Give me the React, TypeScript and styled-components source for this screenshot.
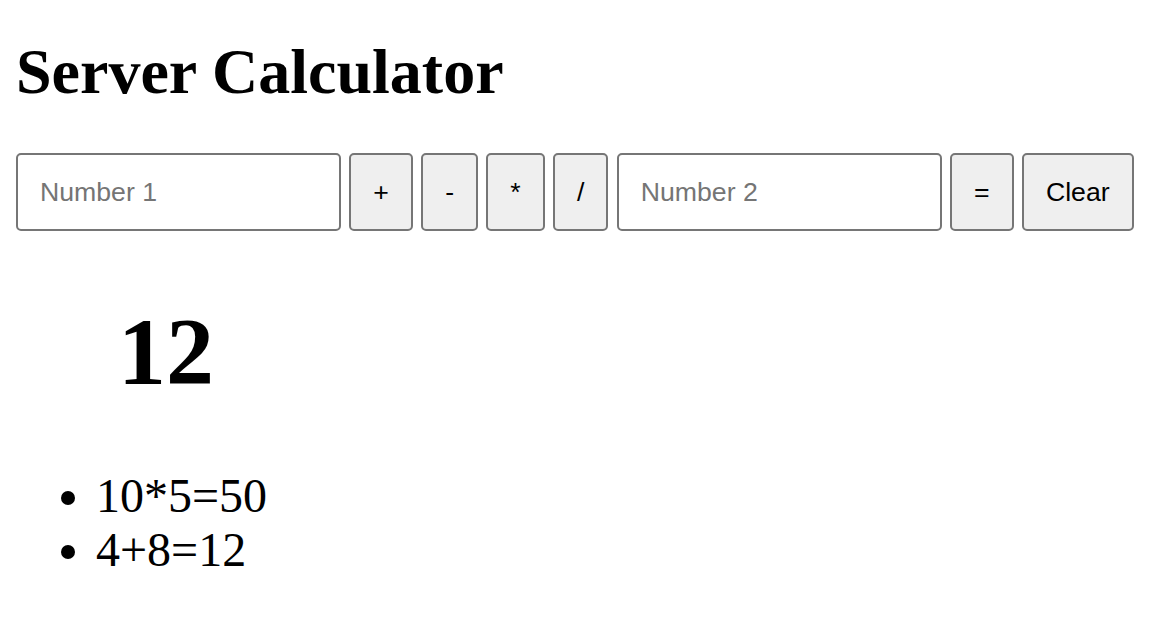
import React from "react";
import styled, { createGlobalStyle } from "styled-components";

const Global = createGlobalStyle`
  html, body { background: #ffffff; }
  body {
    margin: 0;
    font-family: "Liberation Serif", "Times New Roman", serif;
    font-size: 32px;
    color: #000000;
  }
`;

const Page = styled.main`
  display: block;
  padding: 16px;
`;

const Title = styled.h1`
  font-family: "Liberation Serif", "Times New Roman", serif;
  font-weight: 700;
  font-size: 64px;
  line-height: normal;
  margin: 19px 0 44px;
`;

const Controls = styled.form`
  display: flex;
  align-items: stretch;
  gap: 8.3px;
  height: 78px;
`;

const NumberInput = styled.input`
  box-sizing: border-box;
  width: 325px;
  height: 78px;
  padding: 0 22px;
  border: 2px solid #767676;
  border-radius: 5px;
  font-family: "Liberation Sans", Arial, sans-serif;
  font-size: 26.67px;
  color: #000;
  background: #fff;
  outline: none;
  &::placeholder { color: #757575; }
`;

const OpButton = styled.button`
  box-sizing: border-box;
  height: 78px;
  padding: 0 22px;
  border: 2px solid #767676;
  border-radius: 5px;
  background: #efefef;
  color: #000;
  font-family: "Liberation Sans", Arial, sans-serif;
  font-size: 26.67px;
  cursor: pointer;
`;

const Result = styled.h1`
  font-family: "Liberation Serif", "Times New Roman", serif;
  font-weight: 700;
  font-size: 96px;
  line-height: normal;
  margin: 65px 0 0;
  padding-left: 102px;
`;

const History = styled.ul`
  margin: 62px 0 0;
  padding-left: 80px;
  font-size: 48px;
  line-height: 54px;
`;

const HistoryItem = styled.li``;

const ops = ["+", "-", "*", "/"];
const history = ["10*5=50", "4+8=12"];

export default function App() {
  return (
    <Page>
      <Global />
      <Title>Server Calculator</Title>
      <Controls onSubmit={(e) => e.preventDefault()}>
        <NumberInput type="text" placeholder="Number 1" />
        {ops.map((op) => (
          <OpButton key={op} type="button">{op}</OpButton>
        ))}
        <NumberInput type="text" placeholder="Number 2" />
        <OpButton type="button">=</OpButton>
        <OpButton type="button">Clear</OpButton>
      </Controls>
      <Result>12</Result>
      <History>
        {history.map((h) => (
          <HistoryItem key={h}>{h}</HistoryItem>
        ))}
      </History>
    </Page>
  );
}
